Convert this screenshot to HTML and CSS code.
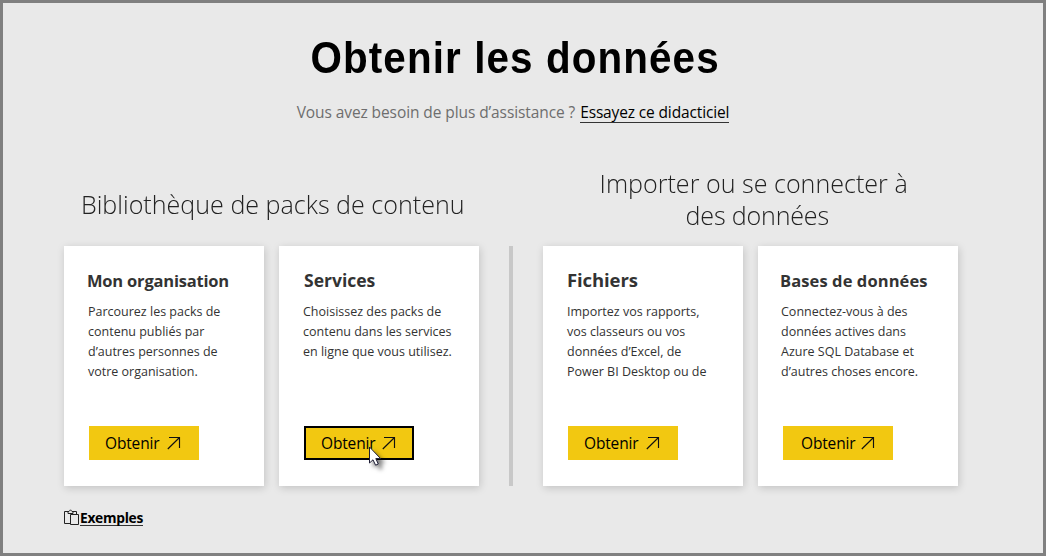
FILE: index.html
```
<!DOCTYPE html>
<html lang="fr">
<head>
<meta charset="utf-8">
<title>Obtenir les données</title>
<link rel="stylesheet" href="styles.css">
</head>
<body>
<svg class="defs" width="0" height="0" aria-hidden="true">
  <symbol id="arrow" viewBox="0 0 14 14"><path d="M2 1.5H12.5V12M12.5 1.5L0.8 13" fill="none" stroke="#111" stroke-width="1.15"/></symbol>
</svg>
<main class="page">
  <h1 class="title">Obtenir les données</h1>
  <p class="help"><span class="question">Vous avez besoin de plus d’assistance ?</span><a class="link">Essayez ce didacticiel</a></p>
  <div class="groups">
    <section class="group">
      <h2 class="heading heading-single"><span class="line">Bibliothèque de packs de contenu</span></h2>
      <div class="cards">
        <article class="card">
          <h3 class="name">Mon organisation</h3>
          <p class="text">Parcourez les packs de<br>contenu publiés par<br>d’autres personnes de<br>votre organisation.</p>
          <a class="button">Obtenir<svg class="arrow"><use href="#arrow"/></svg></a>
        </article>
        <article class="card">
          <h3 class="name name-services">Services</h3>
          <p class="text">Choisissez des packs de<br>contenu dans les services<br>en ligne que vous utilisez.</p>
          <a class="button button-focus">Obtenir<svg class="arrow"><use href="#arrow"/></svg>
            <svg class="cursor" viewBox="0 0 20 26"><path d="M1.5 1V17L5 13.8L7.6 19.2L10.3 18L7.8 12.6H12.6Z" fill="#fff" stroke="#1d1d35" stroke-width="1"/></svg>
          </a>
        </article>
      </div>
    </section>
    <div class="divider"></div>
    <section class="group">
      <h2 class="heading"><span class="line line-first">Importer ou se connecter à</span><span class="line line-second">des données</span></h2>
      <div class="cards">
        <article class="card">
          <h3 class="name name-files">Fichiers</h3>
          <p class="text">Importez vos rapports,<br>vos classeurs ou vos<br>données d’Excel, de<br>Power BI Desktop ou de</p>
          <a class="button">Obtenir<svg class="arrow"><use href="#arrow"/></svg></a>
        </article>
        <article class="card">
          <h3 class="name name-bases">Bases de données</h3>
          <p class="text text-bases">Connectez-vous à des<br>données actives dans<br>Azure SQL Database et<br>d’autres choses encore.</p>
          <a class="button button-bases">Obtenir<svg class="arrow"><use href="#arrow"/></svg></a>
        </article>
      </div>
    </section>
  </div>
  <div class="samples">
    <svg class="clipboard" viewBox="0 0 15 17"><path d="M6 14.5H.5V2.5H4V4.5H9V2.5H12.5V5.5M4 2.5H5L6.5 .8L8 2.5H9M6.5 5.5H14.5V15.5H6.5Z" fill="none" stroke="#222" stroke-width="1"/></svg>
    <a class="samples-link">Exemples</a>
  </div>
</main>
</body>
</html>
```

FILE: styles.css
```
* { box-sizing: border-box; }
body { margin: 0; font-family: "Open Sans", "Noto Sans", sans-serif; }
h1, h2, h3, p { margin: 0; }
.defs { display: block; }
.page {
  width: 1046px; height: 556px; overflow: hidden;
  border: 3px solid #808080; background: #e9e9e9;
  padding: 29px 85px 0 61px;
}
.title {
  padding-left: 9px; text-align: center; white-space: nowrap;
  font: bold 44px/51px "Liberation Sans", Arial, sans-serif;
  letter-spacing: 1.2px; color: #000; transform: scaleX(.918);
}
.help {
  display: flex; justify-content: center; gap: 5px;
  margin-top: 17px; padding-left: 4px;
  font-size: 15.5px; line-height: 24px; letter-spacing: -.09px; white-space: nowrap;
  color: #6e6e6e;
}
.link { height: 23px; border-bottom: 1px solid #333; color: #000; letter-spacing: -.14px; }
.groups { display: flex; gap: 30px; margin-top: 43px; }
.group { width: 415px; }
.heading {
  display: flex; flex-direction: column; align-items: center; gap: 4px;
  height: 79px; padding-top: 2px;
  font-size: 26px; font-weight: 300; line-height: 28px; letter-spacing: 0;
  color: #222; white-space: nowrap;
}
.line { transform: scaleX(.965); }
.heading-single { padding: 23px 0 0 2px; }
.line-first { margin-left: 7px; }
.line-second { margin-left: 14px; letter-spacing: -.2px; }
.divider { width: 4px; height: 240px; margin-top: 79px; background: #c8c8c8; }
.cards { display: flex; gap: 15px; }
.card {
  display: flex; flex-direction: column; align-items: flex-start;
  width: 200px; height: 240px; padding: 23px 0 26px 24px;
  background: #fff; box-shadow: 1px 2px 8px rgba(0, 0, 0, .17);
}
.name {
  height: 24px; margin: 0 0 9px -1px; white-space: nowrap;
  font-size: 16.5px; font-weight: 700; line-height: 24px; letter-spacing: -.2px; color: #333;
}
.name-services { margin-left: 1px; font-size: 17.5px; line-height: 22px; letter-spacing: 0; }
.name-files { margin-left: 0; font-size: 18.5px; line-height: 22px; letter-spacing: -.1px; }
.name-bases { margin-left: -2px; letter-spacing: .1px; }
.text { font-size: 12.5px; line-height: 20px; color: #333; white-space: nowrap; }
.text-bases { margin-left: -1px; }
.button {
  position: relative; display: flex; align-items: center;
  width: 110px; height: 34px; margin: auto 0 0 1px; padding: 0 18px 0 16px;
  background: #f2c811; color: #000;
  font-size: 15.5px; font-weight: 500; line-height: 34px; letter-spacing: -.15px;
}
.button-focus { border: 2px solid #000; padding: 0 16px 0 15px; }
.button-bases { padding-left: 18px; }
.arrow { width: 14px; height: 14px; margin-left: auto; }
.cursor {
  position: absolute; left: 62px; top: 18px; width: 20px; height: 26px; overflow: visible;
  filter: drop-shadow(4px 4px 2px rgba(0, 0, 0, .5));
}
.samples { display: flex; margin-top: 22px; }
.clipboard { width: 15px; height: 17px; margin-top: 1px; }
.samples-link {
  height: 18px; margin-left: 1px; border-bottom: 1px solid #333;
  font-size: 13.8px; font-weight: 700; line-height: 19px; letter-spacing: -.3px; color: #000;
}
```
